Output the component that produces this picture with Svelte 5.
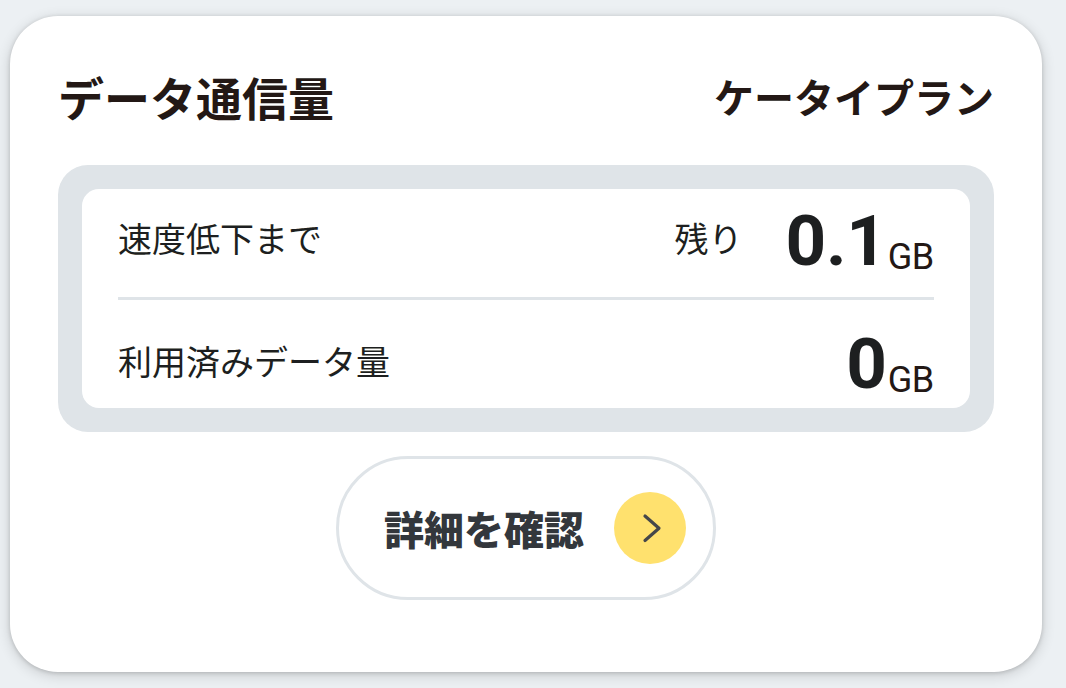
<script>
  const plan = "ケータイプラン";
  const rows = [
    { label: "速度低下まで", note: "残り", value: "0.1" },
    { label: "利用済みデータ量", note: "", value: "0" },
  ];
</script>

<main>
  <section class="card">
    <header>
      <h2>データ通信量</h2>
      <p class="plan">{plan}</p>
    </header>

    <div class="usage">
      <div class="usage-inner">
        {#each rows as row}
          <div class="row">
            <span class="label">{row.label}</span>
            {#if row.note}
              <span class="note">{row.note}</span>
            {/if}
            <span class="value">{row.value}</span>
            <span class="unit">GB</span>
          </div>
        {/each}
      </div>
    </div>

    <button class="detail">
      <span>詳細を確認</span>
      <svg width="72" height="72" viewBox="0 0 72 72">
        <circle cx="36" cy="36" r="36" fill="#ffe16e" />
        <path
          d="M31 24 L45 36.2 L31 48.5"
          fill="none"
          stroke="#45474a"
          stroke-width="3.2"
          stroke-linecap="round"
          stroke-linejoin="round"
        />
      </svg>
    </button>
  </section>
</main>

<style>
  :global(body) {
    margin: 0;
    background: #ecf0f3;
  }
  main {
    box-sizing: border-box;
    height: 688px;
    padding: 16px 24px 16px 10px;
    overflow: hidden;
    color: #231815;
    font-family: Roboto, "Noto Sans CJK JP", sans-serif;
  }
  .card {
    box-sizing: border-box;
    height: 655.5px;
    padding: 46px 48px 0;
    border-radius: 48px;
    background: #fff;
    box-shadow: 0 3px 14px rgba(0, 0, 0, 0.16), 0 1px 4px rgba(0, 0, 0, 0.16);
  }
  header {
    display: flex;
    align-items: center;
    justify-content: space-between;
    height: 68px;
  }
  h2,
  p {
    margin: 0;
    font-weight: 700;
    white-space: nowrap;
  }
  h2 {
    font-size: 46px;
  }
  .plan {
    font-size: 40px;
  }
  .usage {
    box-sizing: border-box;
    height: 267px;
    margin-top: 35px;
    padding: 24px;
    border-radius: 30px;
    background: #dfe4e8;
  }
  .usage-inner {
    box-sizing: border-box;
    height: 219px;
    padding: 0 36px;
    border-radius: 17px;
    background: #fff;
  }
  .row {
    display: flex;
    align-items: flex-start;
    box-sizing: border-box;
    height: 108px;
    padding-top: 15px;
    color: #1d1f20;
    font-size: 34px;
    line-height: 1;
    white-space: nowrap;
  }
  .row + .row {
    padding-top: 27px;
    border-top: 3px solid #dfe4e8;
  }
  .label,
  .note {
    margin-top: 19px;
  }
  .label {
    margin-right: auto;
  }
  .note {
    margin-right: 43px;
  }
  .value {
    margin-top: 1px;
    font-size: 71px;
    line-height: 72px;
    font-weight: 700;
    letter-spacing: -0.3px;
  }
  .unit {
    margin-top: 35px;
    margin-left: 1px;
    color: #231815;
    font-size: 36px;
    letter-spacing: -0.3px;
  }
  .detail {
    box-sizing: border-box;
    display: flex;
    align-items: center;
    justify-content: space-between;
    width: 380px;
    height: 144px;
    margin: 24px auto 0;
    padding: 0 27px 0 45px;
    border: 3px solid #dfe4e8;
    border-radius: 72px;
    background: #fff;
    color: #33373c;
    font: 900 40px Roboto, "Noto Sans CJK JP", sans-serif;
  }
</style>
